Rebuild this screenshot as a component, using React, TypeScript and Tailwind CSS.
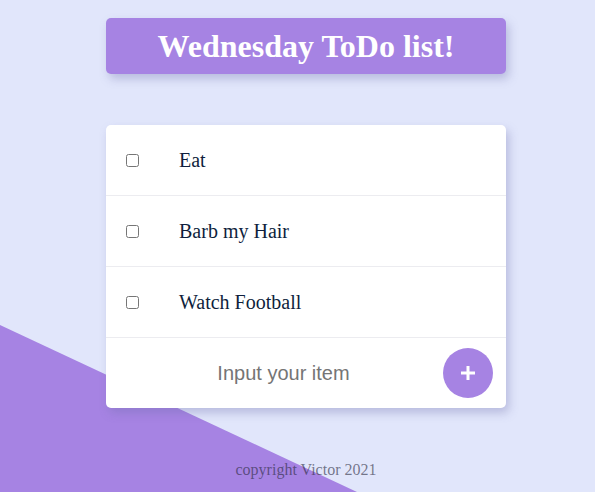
import React from "react";

const items = ["Eat", "Barb my Hair", "Watch Football"];

export default function App() {
  return (
    <div className="relative h-[492px] w-full overflow-hidden bg-[#e1e6fb]" style={{ fontFamily: '"Liberation Serif", serif' }}>
      <div className="absolute left-0 top-0 h-[492px] w-[595px] bg-[#a683e3] [clip-path:polygon(0px_325px,357px_492px,0px_492px)]" />
      <div className="relative flex flex-col items-center pl-[17px] pt-[18px]">
        <div className="flex h-[56px] w-[400px] items-center justify-center rounded-[5px] bg-[#a683e3] shadow-[3px_5px_10px_rgba(110,110,170,0.35)]">
          <h1 className="text-[32px] font-bold leading-none text-white">Wednesday ToDo list!</h1>
        </div>
        <div className="mt-[51px] w-[400px] rounded-[5px] bg-white shadow-[3px_5px_10px_rgba(110,110,170,0.35)]">
          {items.map((t) => (
            <div key={t} className="flex h-[71px] items-center border-b border-[#ececf0]">
              <input type="checkbox" className="ml-[20px] h-[13px] w-[13px]" />
              <span className="ml-[40px] text-[20px] text-[#0f1f3d]">{t}</span>
            </div>
          ))}
          <div className="flex h-[70px] items-center">
            <input
              placeholder="Input your item"
              className="ml-[20px] w-[315px] bg-transparent text-center text-[20px] text-[#333] outline-none placeholder:text-[#757575]"
              style={{ fontFamily: '"Liberation Sans", Arial, sans-serif' }}
            />
            <button className="ml-[2px] flex h-[50px] w-[50px] items-center justify-center rounded-full bg-[#a683e3]">
              <svg width="16" height="16" viewBox="0 0 16 16">
                <path d="M8 1v14M1 8h14" stroke="white" strokeWidth="3" />
              </svg>
            </button>
          </div>
        </div>
        <p className="mt-[50px] text-[16px] text-[rgba(40,40,60,0.6)]">copyright Victor 2021</p>
      </div>
    </div>
  );
}
